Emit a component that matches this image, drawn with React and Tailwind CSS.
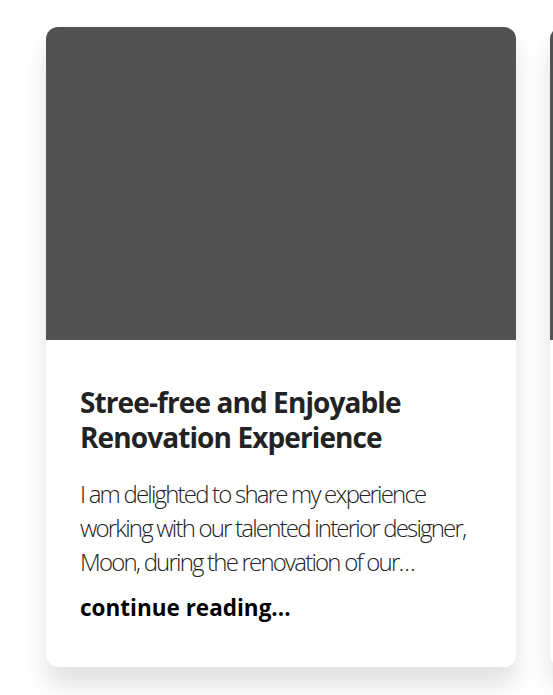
export default function App() {
  return (
    <div className="w-[553px] h-[695px] overflow-hidden bg-white" style={{ fontFamily: '"Open Sans", sans-serif' }}>
      <div className="flex gap-[34px] pl-[46px] pt-[27px]">
        <div className="w-[470px] shrink-0 rounded-[12px] bg-white overflow-hidden shadow-[0_18px_25px_rgba(0,0,0,0.12)]">
          <div className="h-[313px] bg-[#525252]"></div>
          <div className="px-[34px] pt-[45px] pb-[44px]">
            <h2 className="text-[28px] leading-[35px] font-bold text-[#222] tracking-[-0.9px]">
              Stree-free and Enjoyable Renovation Experience
            </h2>
            <p className="mt-[22px] text-[24px] leading-[34px] font-light text-[#222] tracking-[-1.8px]">
              I am delighted to share my experience working with our talented interior designer, Moon, during the renovation of our…
            </p>
            <p className="mt-[14px] text-[22.5px] leading-[30px] font-bold text-black">continue reading...</p>
          </div>
        </div>
        <div className="w-[470px] shrink-0 rounded-[12px] bg-white overflow-hidden shadow-[0_18px_25px_rgba(0,0,0,0.12)]">
          <div className="h-[313px] bg-[#525252]"></div>
        </div>
      </div>
    </div>
  );
}
